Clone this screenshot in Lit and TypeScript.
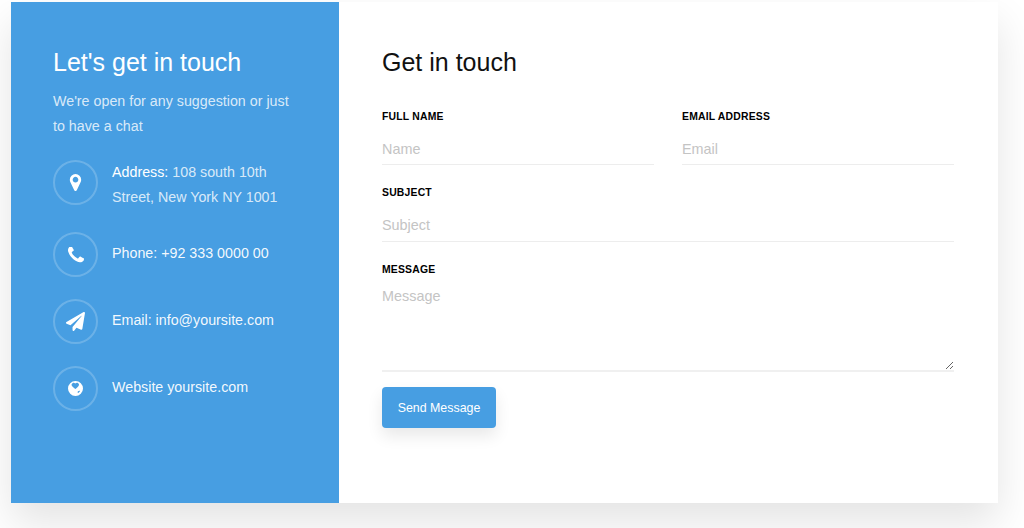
import { LitElement, html, css } from "lit";
import { customElement } from "lit/decorators.js";

@customElement("app-root")
export class AppRoot extends LitElement {
  static styles = css`
    :host {
      display: block;
      height: 528px;
      overflow: hidden;
      background: #fff;
      font-family: "Liberation Sans", Arial, sans-serif;
      padding: 2px 26px 0 11px;
      box-sizing: border-box;
    }
    .card {
      display: flex;
      height: 501px;
      background: #fff;
      box-shadow: 0 20px 40px rgba(0, 0, 0, 0.11);
    }
    .info {
      width: 328px;
      flex: none;
      box-sizing: border-box;
      background: #479ee2;
      padding: 42px 42px 0;
      color: rgba(255, 255, 255, 0.8);
      font-size: 14.28px;
      line-height: 25px;
    }
    .info h3 {
      margin: 0 0 9px;
      color: #fff;
      font-size: 25px;
      font-weight: 400;
      line-height: 36px;
    }
    .info p {
      margin: 0 0 21px;
    }
    .row {
      display: flex;
      align-items: center;
      gap: 14px;
      margin-bottom: 22px;
      height: 45px;
    }
    .row.two {
      align-items: flex-start;
      height: 50px;
    }
    .circle {
      width: 45px;
      height: 45px;
      flex: none;
      box-sizing: border-box;
      border: 2px solid rgba(255, 255, 255, 0.2);
      border-radius: 50%;
      display: flex;
      align-items: center;
      justify-content: center;
    }
    .circle svg {
      fill: #fff;
      display: block;
    }
    .text {
      white-space: nowrap;
    }
    .row:not(.two) .text {
      margin-top: -2px;
      color: rgba(255, 255, 255, 0.95);
    }
    .text b {
      color: #fff;
      font-weight: 400;
    }
    .form {
      flex: 1;
      min-width: 0;
      padding: 42px 44px 0 43px;
    }
    .form h3 {
      margin: 0 0 29px;
      color: #111;
      font-size: 25px;
      font-weight: 400;
      line-height: 36px;
    }
    .grid {
      display: grid;
      grid-template-columns: 1fr 1fr;
      column-gap: 28px;
    }
    .field {
      display: flex;
      flex-direction: column;
    }
    .full {
      grid-column: 1 / -1;
    }
    label {
      font-size: 10.4px;
      font-weight: 700;
      line-height: 16px;
      letter-spacing: 0.2px;
      text-transform: uppercase;
      color: #000;
    }
    input,
    textarea {
      font: inherit;
      font-size: 14.4px;
      color: #333;
      border: 0;
      border-bottom: 1px solid #ededed;
      outline: 0;
      padding: 0;
      background: transparent;
      box-sizing: border-box;
      width: 100%;
      display: block;
    }
    input {
      height: 40px;
      margin-bottom: 20px;
      padding-top: 8px;
    }
    .full input {
      height: 41px;
    }
    textarea {
      height: 94px;
      padding-top: 7px;
      line-height: 22px;
      border-bottom: 2px solid #f0f0f0;
      resize: vertical;
    }
    ::placeholder {
      color: #c4c4c4;
      opacity: 1;
    }
    .send {
      display: block;
      margin-top: 15px;
      width: 114px;
      height: 41px;
      border: 0;
      border-radius: 4px;
      background: #479ee2;
      color: #fff;
      font: inherit;
      font-size: 12.4px;
      box-shadow: 0 8px 16px rgba(0, 0, 0, 0.09);
    }
  `;

  render() {
    return html`
      <div class="card">
        <aside class="info">
          <h3>Let's get in touch</h3>
          <p>We're open for any suggestion or just to have a chat</p>
          <div class="row two">
            <span class="circle">
              <svg width="17" height="17" viewBox="256 128 1280 1536"><path d="M1152 640q0-106-75-181t-181-75-181 75-75 181 75 181 181 75 181-75 75-181zm256 0q0 109-33 179l-364 774q-16 33-47.500 52t-67.500 19-67.500-19-46.500-52l-365-774q-33-70-33-179 0-212 150-362t362-150 362 150 150 362z"/></svg>
            </span>
            <span class="text"><b>Address:</b> 108 south 10th<br />Street, New York NY 1001</span>
          </div>
          <div class="row">
            <span class="circle">
              <svg width="16" height="16" viewBox="192 192 1408 1408"><path d="M1600 1240q0 27-10 70.500t-21 68.500q-21 50-122 106-94 51-186 51-27 0-53-3.500t-57.500-12.500-47-14.500-55.500-20.500-49-18q-98-35-175-83-127-79-264-216t-216-264q-48-77-83-175-3-9-18-49t-20.500-55.500-14.500-47-12.500-57.500-3.500-53q0-92 51-186 56-101 106-122 25-11 68.500-21t70.500-10q14 0 21 3 18 6 53 76 11 19 30 54t35 63.500 31 53.500q3 4 17.500 25t21.500 35.500 7 28.500q0 20-28.500 50t-62 55-62 53-28.500 46q0 9 5 22.500t8.500 20.500 14 24 11.500 19q76 137 174 235t235 174q2 1 19 11.500t24 14 20.500 8.500 22.500 5q18 0 46-28.500t53-62 55-62 50-28.500q14 0 28.500 7t35.500 21.500 25 17.500q25 15 53.500 31t63.500 35 54 30q70 35 76 53 3 7 3 21z"/></svg>
            </span>
            <span class="text">Phone: +92 333 0000 00</span>
          </div>
          <div class="row">
            <span class="circle">
              <svg width="19" height="19" viewBox="0 0 512 512"><path d="M476 3.200 12.500 270.600c-18.100 10.400-15.800 35.600 2.200 43.200L121 358.400l287.300-253.200c5.500-4.900 13.300 2.600 8.600 8.300L176 407v80.500c0 23.600 28.500 32.900 42.500 15.800L282 426l124.600 52.200c14.200 6 30.400-2.900 33-18.200l72-432C515 7.800 493.300-6.800 476 3.200z"/></svg>
            </span>
            <span class="text">Email: info@yoursite.com</span>
          </div>
          <div class="row">
            <span class="circle">
              <svg width="15" height="15" viewBox="0 0 15 15"><path fill-rule="evenodd" d="M7.500 0a7.500 7.500 0 1 0 0 15 7.500 7.500 0 0 0 0-15zM4.500 2.300c1-.7 1.900-.5 2.700.2.700-.6 1.800-.9 2.700-.5.900.4 1.300 1.300 1 2.200-.4 1.200-2.300 2.900-3.500 3.700C6.200 7.100 4 5.500 3.600 4.200c-.2-.7.300-1.400.9-1.900zM9.800 10.400c.6-.5 1.500-.7 2.300-.5-.4.800-1 1.500-1.800 2-.6-.1-1-.9-.5-1.500z"/></svg>
            </span>
            <span class="text">Website yoursite.com</span>
          </div>
        </aside>
        <section class="form">
          <h3>Get in touch</h3>
          <div class="grid">
            <div class="field">
              <label>Full name</label>
              <input type="text" placeholder="Name" />
            </div>
            <div class="field">
              <label>Email address</label>
              <input type="text" placeholder="Email" />
            </div>
            <div class="field full">
              <label>Subject</label>
              <input type="text" placeholder="Subject" />
            </div>
            <div class="field full">
              <label>Message</label>
              <textarea placeholder="Message"></textarea>
            </div>
          </div>
          <button class="send">Send Message</button>
        </section>
      </div>
    `;
  }
}
